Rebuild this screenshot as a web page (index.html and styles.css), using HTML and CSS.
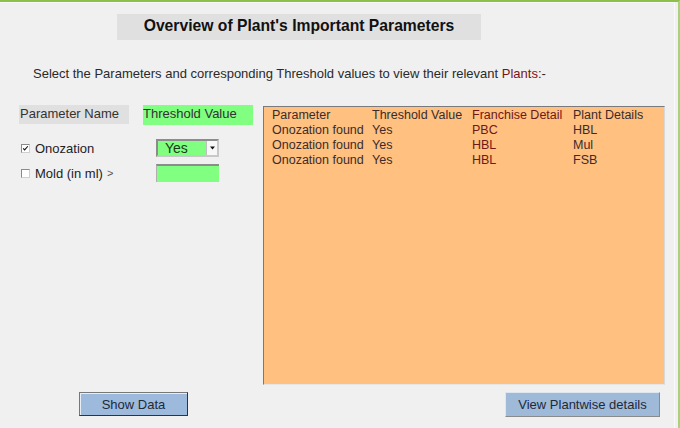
FILE: index.html
```html
<!DOCTYPE html>
<html>
<head>
<meta charset="utf-8">
<link rel="stylesheet" href="styles.css">
</head>
<body>
<div class="page">
  <div class="inner">
    <div class="title">Overview of Plant's Important Parameters</div>
    <div class="subtitle">Select the Parameters and corresponding Threshold values to view their relevant <span class="red">Plants</span>:-</div>
    <div class="main">
      <div class="left">
        <div class="head-row">
          <div class="head-name">Parameter Name</div>
          <div class="head-value">Threshold Value</div>
        </div>
        <div class="param-row first">
          <label class="param-label"><span class="cb"><svg width="9" height="9" viewBox="0 0 9 9"><path d="M1.5 4.2 L3.4 6.3 L7.5 1.6" fill="none" stroke="#111" stroke-width="1.4"/></svg></span>Onozation</label>
          <div class="select"><span class="select-text">Yes</span><span class="select-btn"><svg width="7" height="4" viewBox="0 0 7 4"><path d="M1 0.5 H6 L3.5 3.5 Z" fill="#111"/></svg></span></div>
        </div>
        <div class="param-row">
          <label class="param-label"><span class="cb"></span>Mold (in ml)<span class="gt">&gt;</span></label>
          <div class="input"></div>
        </div>
      </div>
      <div class="results">
        <div class="res-row hdr"><span>Parameter</span><span>Threshold Value</span><span class="c3">Franchise Detail</span><span>Plant Details</span></div>
        <div class="res-row"><span>Onozation found</span><span>Yes</span><span class="c3">PBC</span><span>HBL</span></div>
        <div class="res-row"><span>Onozation found</span><span>Yes</span><span class="c3">HBL</span><span>Mul</span></div>
        <div class="res-row"><span>Onozation found</span><span>Yes</span><span class="c3">HBL</span><span>FSB</span></div>
      </div>
    </div>
    <div class="footer">
      <button class="btn btn-show">Show Data</button>
      <button class="btn btn-view">View Plantwise details</button>
    </div>
  </div>
</div>
</body>
</html>
```

FILE: styles.css
```css
* { box-sizing: border-box; }
html, body { margin: 0; padding: 0; }
body {
  width: 680px;
  height: 428px;
  overflow: hidden;
  background: #f0f0f0;
  font-family: "Liberation Sans", Arial, sans-serif;
  color: #222;
}
.page {
  width: 680px;
  height: 428px;
  border-top: 2px solid #8cc04a;
  border-right: 2px solid #a9d27a;
  background: #f0f0f0;
}
.inner {
  height: 100%;
  border-top: 1px solid #f8f8f8;
  border-right: 1px solid #fafafa;
  margin-right: 3px;
}
.title {
  margin-left: 117px;
  margin-top: 11px;
  width: 364px;
  height: 26px;
  line-height: 24px;
  background: #e0e0e0;
  text-align: center;
  font-weight: bold;
  font-size: 15.7px;
  color: #111;
}
.subtitle {
  margin-top: 26px;
  margin-left: 33px;
  font-size: 13px;
  line-height: 16px;
  color: #2a2a2a;
}
.red { color: #7a1414; }
.main {
  display: flex;
  margin-top: 23px;
  height: 280px;
}
.left {
  width: 244px;
  margin-left: 19px;
  display: flex;
  flex-direction: column;
}
.head-row {
  display: flex;
  gap: 14px;
  align-items: flex-start;
}
.head-name {
  width: 110px;
  height: 19px;
  line-height: 18px;
  background: #e0e0e0;
  font-size: 13px;
  padding-left: 1px;
  color: #333;
}
.head-value {
  width: 110px;
  height: 20px;
  line-height: 18px;
  background: #80ff80;
  font-size: 13px;
  color: #333;
}
.param-row {
  display: flex;
  align-items: center;
  height: 18px;
  margin-top: 7px;
}
.param-row.first { margin-top: 14px; }
.param-label {
  width: 137px;
  display: flex;
  align-items: center;
  font-size: 13px;
  color: #222;
  padding-left: 2px;
}
.cb {
  display: inline-flex;
  align-items: center;
  justify-content: center;
  width: 9px;
  height: 9px;
  border: 1px solid #8a8a8a;
  border-right-color: #cfcfcf;
  border-bottom-color: #cfcfcf;
  background: #fff;
  margin-right: 5px;
}
.cb svg { display: block; }
.gt { font-size: 11px; color: #555; margin-left: 4px; }
.select {
  width: 63px;
  height: 18px;
  background: #80ff80;
  border: 2px solid #8c8c8c;
  border-right-color: #c8c8c8;
  border-bottom-color: #c8c8c8;
  display: flex;
  align-items: center;
}
.select-text {
  flex: 1;
  font-size: 14px;
  padding-left: 7px;
  color: #1a3a1a;
}
.select-btn {
  width: 11px;
  height: 14px;
  background: #f7f7f7;
  border-left: 1px solid #c0c0c0;
  display: flex;
  align-items: center;
  justify-content: center;
}
.select-btn svg { display: block; }
.input {
  width: 63px;
  height: 18px;
  background: #80ff80;
  border-top: 2px solid #8c8c8c;
  border-left: 1px solid #b0b0b0;
}
.results {
  margin-top: 1px;
  width: 402px;
  height: 279px;
  background: #ffc080;
  border: 1px solid #7a7a7a;
  border-right-color: #d8d8d8;
  border-bottom-color: #e6e6e6;
  padding: 1px 0 0 8px;
}
.res-row {
  display: grid;
  grid-template-columns: 100px 100px 101px 100px;
  font-size: 12.5px;
  line-height: 15px;
  color: #3a2c2c;
  white-space: nowrap;
}
.res-row .c3 { color: #6e1818; }
.footer {
  display: flex;
  align-items: flex-start;
  margin-top: 7px;
  padding-left: 79px;
}
.btn {
  font-family: "Liberation Sans", Arial, sans-serif;
  font-size: 13px;
  color: #1e2a3a;
  padding: 0;
  cursor: default;
}
.btn-show {
  width: 109px;
  height: 24px;
  background: #9db9dc;
  border: 1px solid #333;
  border-top-color: #777;
  border-left-color: #777;
  box-shadow: inset 1px 1px 0 #e8eef6;
}
.btn-view {
  margin-left: auto;
  margin-right: 14px;
  width: 155px;
  height: 25px;
  background: #9fb9d8;
  border: none;
  border-right: 1px solid #8a8a8a;
  border-bottom: 1px solid #8a8a8a;
  border-top: 1px solid #dde5ef;
  border-left: 1px solid #dde5ef;
}
```
